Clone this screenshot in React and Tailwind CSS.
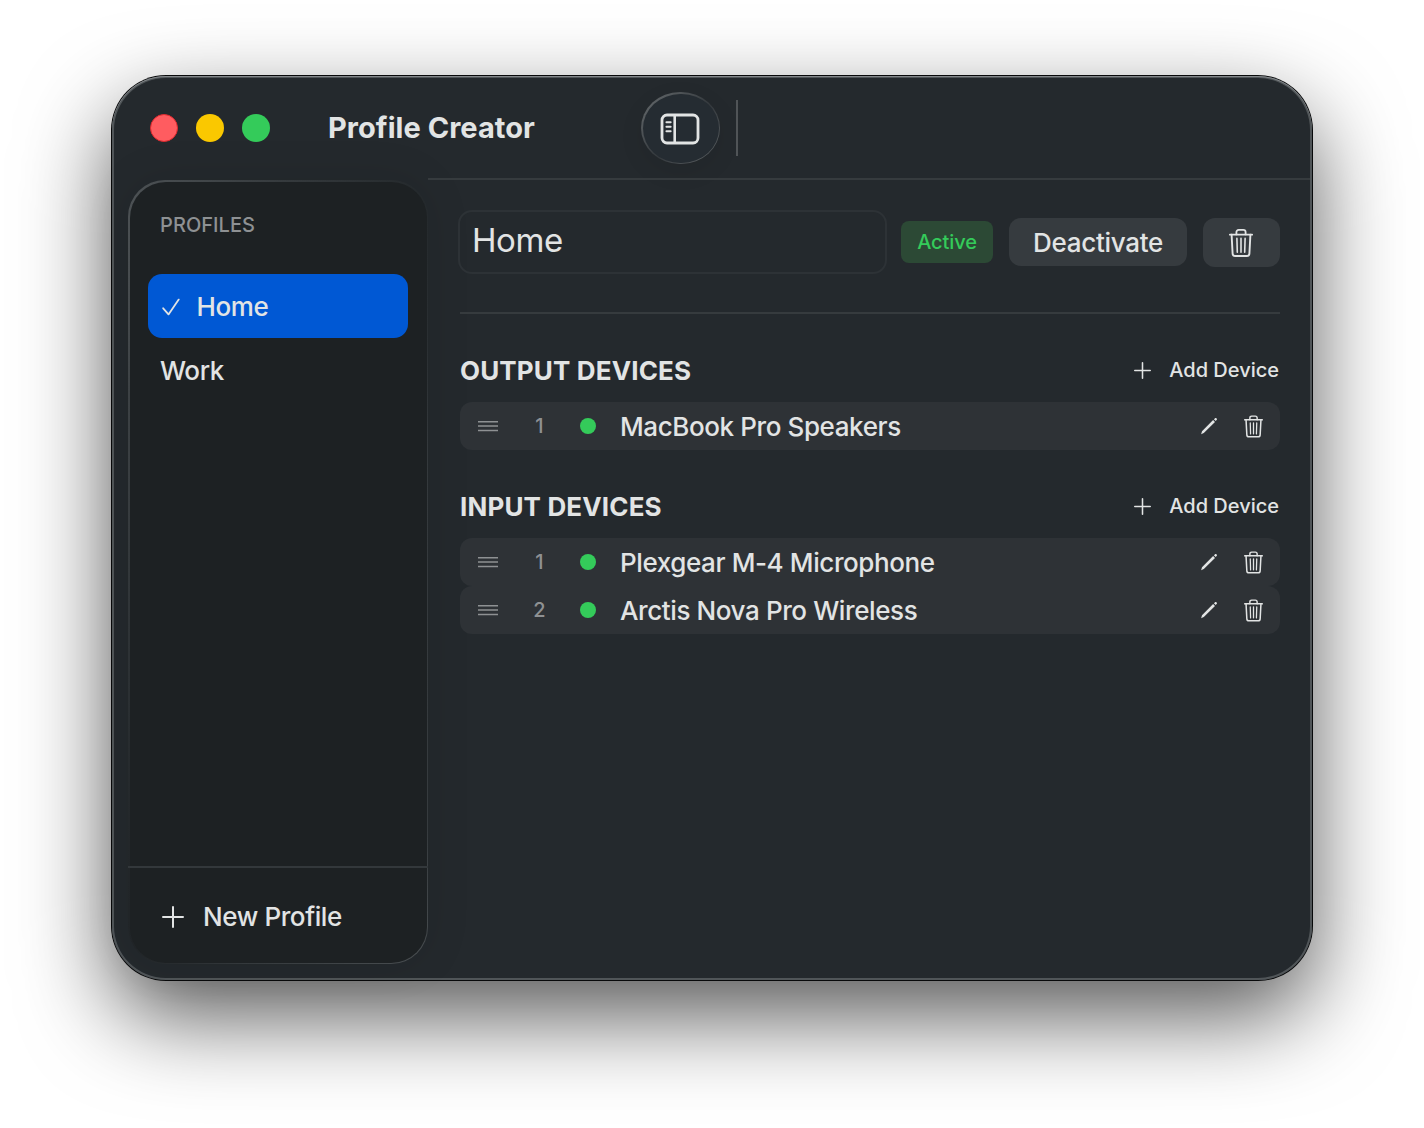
import React, { useState } from "react";
import clsx from "clsx";

const profiles = [
  { name: "Home", active: true },
  { name: "Work", active: false },
];

const outputDevices = ["MacBook Pro Speakers"];
const inputDevices = ["Plexgear M-4 Microphone", "Arctis Nova Pro Wireless"];

const TrashIcon = ({ className }) => (
  <svg viewBox="0 0 24 28" fill="none" stroke="currentColor" strokeLinecap="round" strokeLinejoin="round" className={className}>
    <path d="M0.9 5.6H23.1" strokeWidth="1.9" />
    <path d="M7.4 5.4V3.2C7.4 1.8 8.3 0.9 9.7 0.9H14.3C15.7 0.9 16.6 1.8 16.6 3.2V5.4" strokeWidth="1.8" />
    <path d="M2.6 5.8L3.6 24.6C3.7 26.1 4.6 27 6.1 27H17.9C19.4 27 20.3 26.1 20.4 24.6L21.4 5.8" strokeWidth="1.9" />
    <path d="M7.9 9.4L8.3 23.3M12 9.4V23.3M16.1 9.4L15.7 23.3" strokeWidth="1.6" />
  </svg>
);

const PencilIcon = () => (
  <svg viewBox="0 0 18 18" fill="currentColor" className="w-[18px] h-[18px]">
    <path d="M1.2 16.9L2 14.2L13.1 3L15 4.9L3.8 16L1.6 17.1C1.3 17.2 1.1 17.1 1.2 16.9Z" />
    <path d="M13.9 2.3L14.8 1.4C15.3 0.9 16.1 0.9 16.6 1.4C17.1 1.9 17.1 2.6 16.6 3.1L15.7 4Z" />
  </svg>
);

const PlusIcon = ({ className }) => (
  <svg viewBox="0 0 22 22" fill="none" stroke="currentColor" strokeLinecap="round" className={className}>
    <path d="M11 1V21M1 11H21" strokeWidth="2" />
  </svg>
);

const GripIcon = () => (
  <svg viewBox="0 0 20 12" stroke="#8e9193" strokeWidth="1.5" className="w-5 h-3">
    <path d="M0 1.7H20M0 6.1H20M0 10.5H20" />
  </svg>
);

const SidebarIcon = () => (
  <svg viewBox="0 0 40 32" fill="none" stroke="currentColor" className="w-10 h-8 -ml-0.5 mt-px">
    <rect x="2" y="2" width="36" height="28" rx="5" strokeWidth="2.8" />
    <path d="M14.7 2.5V30" strokeWidth="2.6" />
    <path d="M6.4 9.3H10.7M6.4 13.8H10.7M6.4 18.2H10.7" strokeWidth="1.9" strokeLinecap="round" />
  </svg>
);

function TitleBar() {
  return (
    <header className="h-[102px] flex items-center pl-[38px]">
      <div className="flex gap-[18px] mt-0.5">
        <span className="size-7 rounded-full bg-[#ff5c60] border border-[#e0282d]" />
        <span className="size-7 rounded-full bg-[#fac800]" />
        <span className="size-7 rounded-full bg-[#34cb5a]" />
      </div>
      <h1 className="w-[312px] ml-[58px] mt-0.5 text-[29px] font-[650] tracking-[0.05px]">Profile Creator</h1>
      <div className="w-[79px] h-[72px] mt-0.5 ml-px rounded-[39px/36px] p-[1.5px] bg-[linear-gradient(135deg,#5a5f62_15%,#373c40_50%,#34393d_55%,#5a5f62_90%)] shadow-[0_8px_24px_rgba(0,0,0,0.08)]">
        <button className="w-full h-full rounded-[38px/35px] bg-[#252c32] flex items-center justify-center">
          <SidebarIcon />
        </button>
      </div>
      <span className="w-0.5 h-14 ml-4 mt-0.5 bg-[#505457]" />
    </header>
  );
}

function Sidebar({ selected, onSelect }) {
  return (
    <aside className="w-[300px] h-[784px] ml-4 mt-0.5 shrink-0 rounded-[37px] p-[1.5px] bg-[conic-gradient(from_0deg_at_50%_50%,#363b3e_0deg,#24292c_21deg,#34393c_50deg,#363b3e_150deg,#484d50_160deg,#34393c_185deg,#202427_201deg,#2b3033_230deg,#3c4144_320deg,#4c5154_339deg,#363b3e_360deg)] shadow-[0_0_46px_rgba(0,0,0,0.1)]">
      <div className="h-full rounded-[36px] bg-[#1d2123] flex flex-col">
        <h2 className="pl-[30.5px] pt-[29px] h-[92px] text-[20px] leading-7 font-medium tracking-[0.05px] text-[#8e9193]">PROFILES</h2>
        <div className="px-[18.5px] flex-1">
          {profiles.map((p) => (
            <button
              key={p.name}
              onClick={() => onSelect(p.name)}
              className={clsx(
                "w-full h-16 rounded-[14px] flex items-center pl-3 pt-0.5 text-[26px] font-[450] tracking-[-0.4px]",
                selected === p.name && "bg-[#0058d4]"
              )}
            >
              {p.active && (
                <svg viewBox="0 0 18 18" fill="none" stroke="currentColor" strokeWidth="1.8" strokeLinecap="round" strokeLinejoin="round" className="size-[18px] ml-[1.5px] mr-[17px]">
                  <path d="M1.2 10.3L6.5 16.4L16.7 1.6" />
                </svg>
              )}
              {p.name}
            </button>
          ))}
        </div>
        <button className="h-[97px] -mx-[1.5px] px-[34px] border-t-2 border-[#33383b] flex items-center text-[26px] font-[450] tracking-[-0.4px] pt-[3px]">
          <PlusIcon className="size-[22px] mr-[19px]" />
          New Profile
        </button>
      </div>
    </aside>
  );
}

function DeviceSection({ title, devices, className }) {
  return (
    <section className={className}>
      <div className="h-8 flex items-center justify-between mb-4">
        <h2 className="text-[26px] font-bold tracking-[0.15px]">{title}</h2>
        <button className="flex items-center text-[20px] font-medium mr-px">
          <PlusIcon className="size-[17px] mr-[18px]" />
          Add Device
        </button>
      </div>
      {devices.map((name, i) => (
        <div key={name} className="h-12 rounded-xl bg-[#2e3236] flex items-center pl-[18px] pr-[17px]">
          <GripIcon />
          <span className="w-[82px] pl-px text-center text-[20px] font-medium text-[#8e9193]">{i + 1}</span>
          <span className="size-4 rounded-full bg-[#34cb5a]" />
          <span className="ml-6 flex-1 text-[26px] font-[450] tracking-[-0.4px]">{name}</span>
          <button className="mr-[26px]">
            <PencilIcon />
          </button>
          <button>
            <TrashIcon className="w-[19px] h-[23px]" />
          </button>
        </div>
      ))}
    </section>
  );
}

export default function App() {
  const [selected, setSelected] = useState("Home");

  return (
    <div className="w-[1424px] h-[1128px] overflow-hidden bg-white px-28 pt-[76px] font-['Inter',sans-serif] text-[#e2e4e4] whitespace-nowrap">
      <div className="w-[1200px] h-[904px] rounded-[54px] bg-[#24292d] shadow-[inset_0_1px_0_#83878a,inset_0_0_0_2px_#505558,0_0_0_1px_#08090a,0_36px_90px_rgba(0,0,0,0.66)]">
        <TitleBar />
        <div className="flex">
          <Sidebar selected={selected} onSelect={setSelected} />
          <main className="flex-1 border-t-2 border-[#363b3e] mr-0.5 pl-8 pr-[30px]">
            <div className="h-[134px] pt-[30px] border-b-2 border-[#363b3e] flex items-start">
              <input
                readOnly
                value={selected}
                className="w-[429px] h-16 -ml-0.5 pl-3 pb-1 rounded-[14px] border-2 border-[#2d3236] text-[33px] tracking-[-0.4px] outline-none"
              />
              <span className="ml-3.5 mt-[11px] w-[92px] h-[42px] rounded-lg bg-[#2c4935] text-[#34cb5a] text-[20px] font-medium tracking-[-0.1px] flex items-center justify-center">
                Active
              </span>
              <button className="ml-4 mt-2 w-[178px] h-12 rounded-xl bg-[#363b3f] text-[26px] font-[450] tracking-[-0.3px] flex items-center justify-center">
                Deactivate
              </button>
              <button className="ml-4 mt-2 w-[77px] h-[49px] rounded-xl bg-[#363b3f] flex items-center justify-center pr-px">
                <TrashIcon className="w-6 h-7" />
              </button>
            </div>
            <DeviceSection title="OUTPUT DEVICES" devices={outputDevices} className="mt-10" />
            <DeviceSection title="INPUT DEVICES" devices={inputDevices} className="mt-10" />
          </main>
        </div>
      </div>
    </div>
  );
}
